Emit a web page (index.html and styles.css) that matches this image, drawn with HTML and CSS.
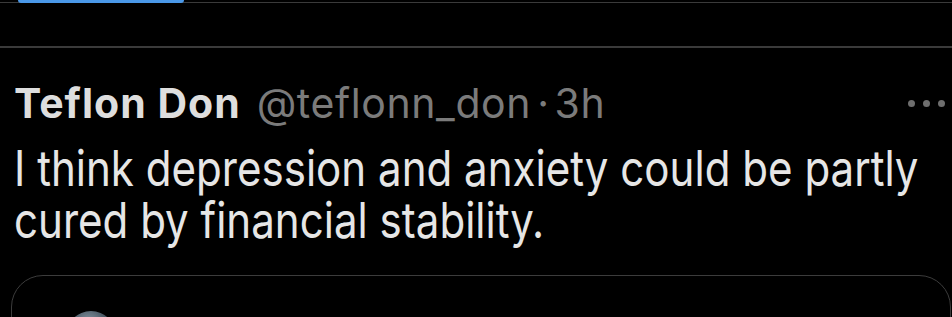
FILE: index.html
```html
<!DOCTYPE html>
<html>
<head>
<meta charset="utf-8">
<link rel="stylesheet" href="styles.css">
</head>
<body>
<div class="page">
  <div class="top-strip">
    <div class="tab-indicator"></div>
  </div>
  <div class="spacer"></div>
  <article class="tweet">
    <header class="tweet-head">
      <span class="name">Teflon Don</span>
      <span class="handle">@teflonn_don</span>
      <span class="sep">·</span>
      <span class="time">3h</span>
      <span class="more"><i></i><i></i><i></i></span>
    </header>
    <p class="body">I think depression and anxiety could be partly cured by financial stability.</p>
    <div class="quote">
      <div class="quote-avatar"></div>
    </div>
  </article>
</div>
</body>
</html>
```
FILE: styles.css
```css
html, body {
  margin: 0;
  padding: 0;
  background: #000;
  overflow: hidden;
}
.page {
  width: 952px;
  height: 317px;
  overflow: hidden;
  background: #000;
  font-family: Inter, "Noto Sans", sans-serif;
  color: #e2e2e2;
}
.top-strip {
  position: relative;
  height: 2px;
  border-bottom: 1px solid #3a3a3a;
}
.tab-indicator {
  position: absolute;
  left: 18px;
  top: 0;
  width: 166px;
  height: 3px;
  border-radius: 0 0 3px 3px;
  background: #4a98e8;
}
.spacer {
  height: 43px;
  border-bottom: 2px solid #3a3a3a;
}
.tweet {
  padding: 31px 0 0 14px;
}
.tweet-head {
  display: flex;
  align-items: baseline;
  height: 48px;
  line-height: 48px;
  font-size: 41px;
}
.name {
  font-weight: 700;
  color: #dedede;
  letter-spacing: 1px;
  margin-right: 16px;
}
.handle, .sep, .time {
  color: #7b7b7b;
  font-weight: 400;
  letter-spacing: 0.6px;
}
.sep { margin: 0 5px 0 6px; }
.more {
  margin-left: auto;
  margin-right: 7px;
  display: flex;
  gap: 8px;
  align-self: center;
}
.more i {
  display: block;
  width: 7px;
  height: 7px;
  border-radius: 50%;
  background: #6e6e6e;
}
.body {
  margin: 15px 0 0 0;
  width: 1100px;
  font-size: 49.5px;
  line-height: 52px;
  color: #e6e6e6;
  transform: scaleX(0.85);
  transform-origin: left top;
}
.quote {
  margin: 29px 0 0 -3px;
  width: 938px;
  height: 80px;
  border: 1.5px solid #3c3c3c;
  border-radius: 32px;
  position: relative;
  overflow: hidden;
}
.quote-avatar {
  position: absolute;
  left: 54px;
  top: 35px;
  width: 50px;
  height: 50px;
  border-radius: 50%;
  background: radial-gradient(circle at 45% 25%, #8a9aa6, #2a3844 55%, #141c22 80%);
}
```
